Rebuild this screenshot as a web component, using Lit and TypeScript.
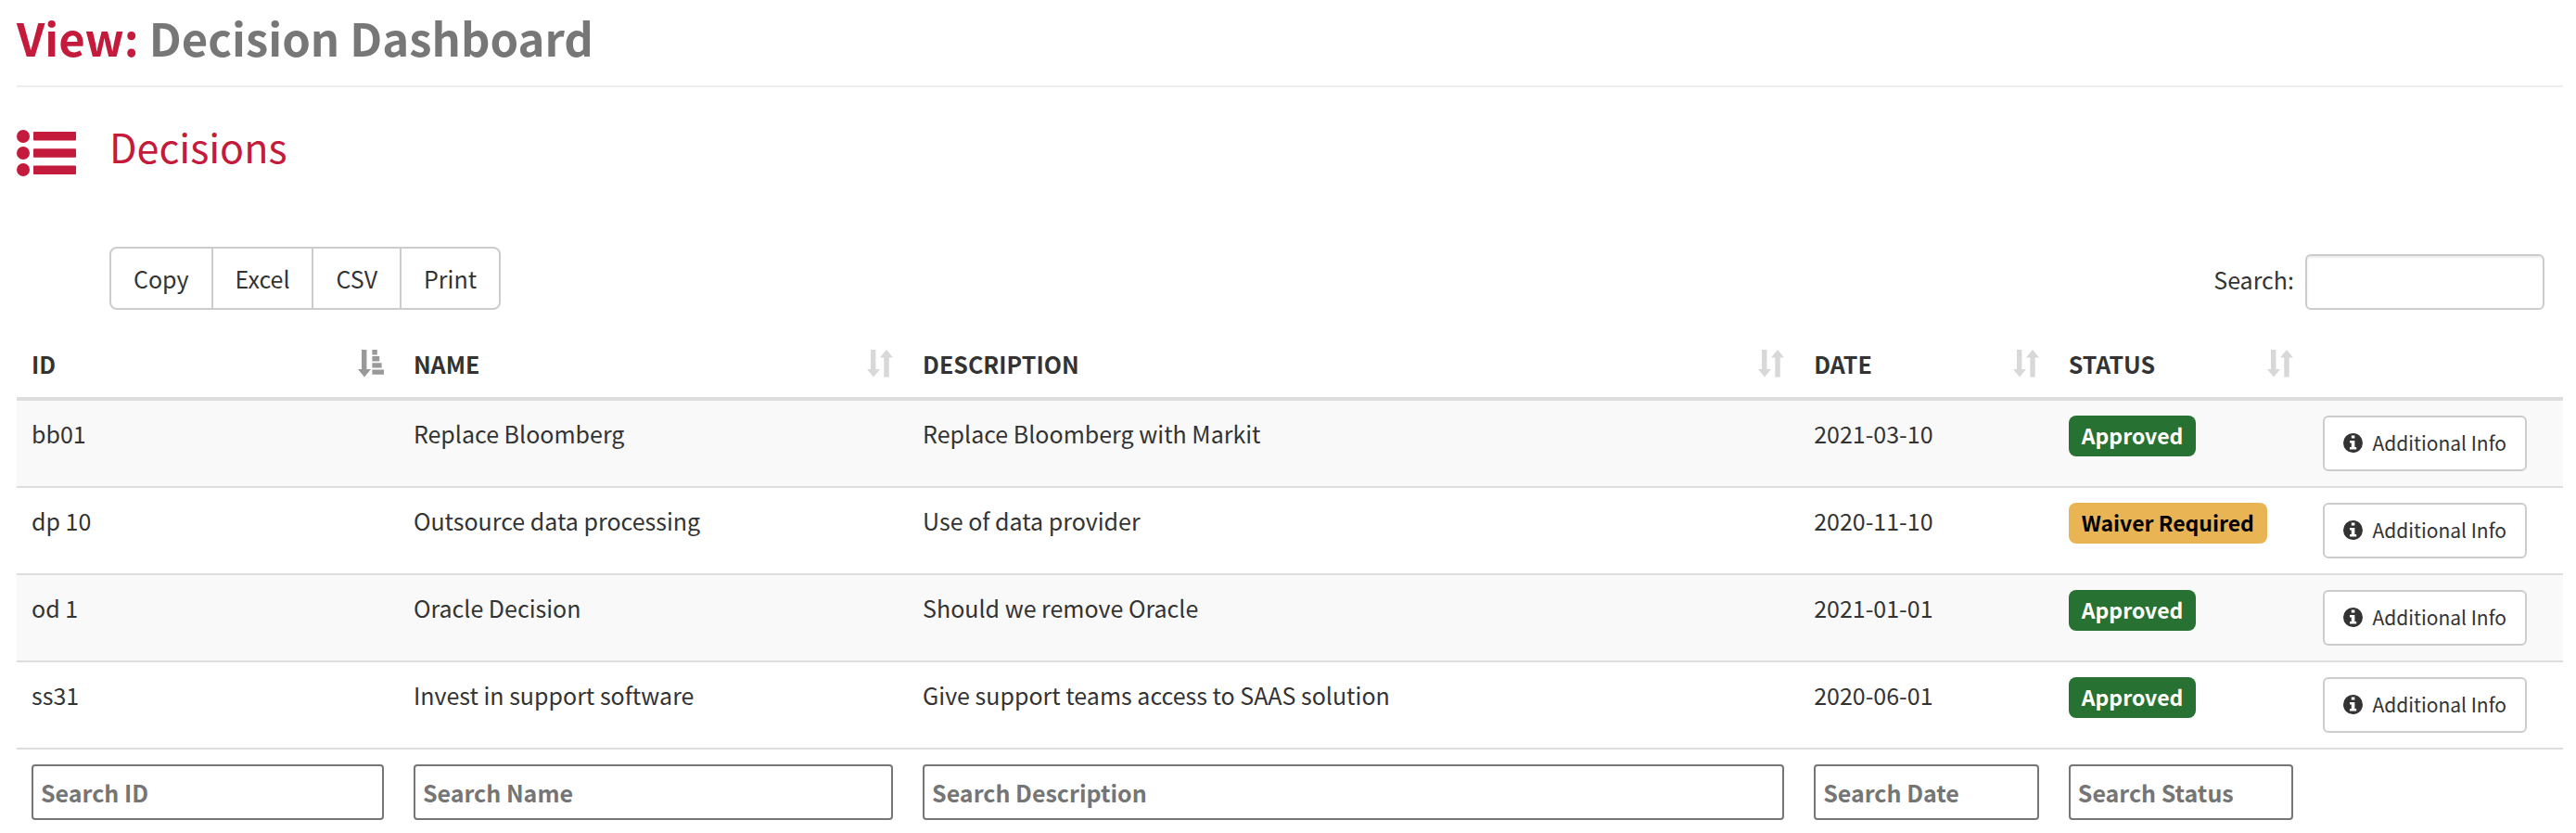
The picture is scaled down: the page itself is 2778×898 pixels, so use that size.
import { LitElement, html, css, svg, nothing } from "lit";
import { customElement, state } from "lit/decorators.js";

type Key = "id" | "name" | "description" | "date" | "status";
type Decision = Record<Key, string>;

const COLUMNS: { key: Key; label: string }[] = [
  { key: "id", label: "ID" },
  { key: "name", label: "Name" },
  { key: "description", label: "Description" },
  { key: "date", label: "Date" },
  { key: "status", label: "Status" },
];

const DECISIONS: Decision[] = [
  { id: "bb01", name: "Replace Bloomberg", description: "Replace Bloomberg with Markit", date: "2021-03-10", status: "Approved" },
  { id: "dp 10", name: "Outsource data processing", description: "Use of data provider", date: "2020-11-10", status: "Waiver Required" },
  { id: "od 1", name: "Oracle Decision", description: "Should we remove Oracle", date: "2021-01-01", status: "Approved" },
  { id: "ss31", name: "Invest in support software", description: "Give support teams access to SAAS solution", date: "2020-06-01", status: "Approved" },
];

const downArrow = svg`<path d="M4 0h5.4v21h4.6L7 29.4 0 21h4z" />`;

const sortedIcon = html`<svg class="sort-icon active" viewBox="0 0 28 30" aria-hidden="true">
  ${downArrow}
  <path d="M15.4 0h5.4v5.4h-5.4zM15.4 7h7.8v5.4h-7.8zM15.4 14.2h10.2v5.4H15.4zM15.4 21.4H28v5.4H15.4z" />
</svg>`;

const unsortedIcon = html`<svg class="sort-icon" viewBox="0 0 28 30" aria-hidden="true">
  ${downArrow}
  <path d="M21 0l7 8.4h-4.3v21h-5.4v-21H14z" />
</svg>`;

const listIcon = html`<svg class="list-icon" viewBox="0 0 64 50" aria-hidden="true">
  <circle cx="7" cy="7" r="7" /><circle cx="7" cy="25" r="7" /><circle cx="7" cy="43" r="7" />
  <rect x="18" y="2" width="46" height="9.4" rx="1" />
  <rect x="18" y="20.3" width="46" height="9.4" rx="1" />
  <rect x="18" y="38.6" width="46" height="9.4" rx="1" />
</svg>`;

const infoIcon = html`<svg class="info-icon" viewBox="0 0 21 21" aria-hidden="true">
  <path fill-rule="evenodd" d="M10.5 0a10.5 10.5 0 1 0 0 21a10.5 10.5 0 1 0 0-21zM8.8 2.6h3.6v3H8.8zM7 7.9h5.4v7.2h1.8v2.5H7v-2.5h1.8v-4.7H7z" />
</svg>`;

@customElement("app-root")
export class AppRoot extends LitElement {
  @state() private query = "";
  @state() private filters: Partial<Decision> = {};
  @state() private sortKey: Key = "id";

  static styles = css`
    :host {
      display: block;
      padding: 0 14px 14px 18px;
      background: #fff;
      color: #333;
      font-family: "Noto Sans CJK SC", "Noto Sans", sans-serif;
      font-size: 25px;
      line-height: 38px;
    }
    * { box-sizing: border-box; }
    button, input { font: inherit; color: inherit; margin: 0; }
    .title {
      margin: 0;
      padding: 8px 0 20px;
      border-bottom: 2px solid #eee;
      font-size: 49px;
      line-height: 64px;
      font-weight: 700;
      color: #777;
    }
    .accent { color: #c41a3b; }
    .section {
      display: flex;
      align-items: flex-end;
      gap: 36px;
      padding: 30px 0 76px;
      color: #c41a3b;
    }
    .list-icon { width: 64px; height: 50px; fill: currentColor; }
    .heading { margin: 0; font-size: 43px; line-height: 66px; font-weight: 400; }
    .toolbar { display: flex; justify-content: space-between; align-items: flex-end; padding: 0 20px 0 100px; }
    .exports { display: flex; }
    .export {
      height: 68px;
      padding: 0 24px;
      margin-left: -2px;
      border: 2px solid #ccc;
      background: #fff;
    }
    .export:first-child { margin-left: 0; border-radius: 8px 0 0 8px; }
    .export:last-child { border-radius: 0 8px 8px 0; }
    .search { display: flex; gap: 12px; line-height: 54px; }
    .search-box {
      width: 258px;
      height: 60px;
      padding: 10px 20px;
      border: 2px solid #ccc;
      border-radius: 6px;
      background: #fff;
      box-shadow: inset 0 2px 2px rgba(0, 0, 0, 0.075);
    }
    .table { width: 100%; margin-top: 12px; border-collapse: separate; border-spacing: 0; table-layout: fixed; }
    .col-id { width: 15%; }
    .col-name { width: 20%; }
    .col-description { width: 35%; }
    .head { padding: 24px 16px 14px; height: 86px; border-bottom: 4px solid #ddd; text-align: left; font-weight: 700; }
    .sort {
      display: flex;
      align-items: center;
      justify-content: space-between;
      width: 100%;
      padding: 0;
      border: 0;
      background: none;
      text-transform: uppercase;
    }
    .sort-icon { width: 28px; height: 30px; fill: #d8d8d8; }
    .active { fill: #999; }
    .cell { padding: 16px; height: 94px; border-bottom: 2px solid #ddd; vertical-align: top; }
    .row:nth-child(odd) { background: #f9f9f9; }
    .badge {
      display: inline-block;
      padding: 0 14px 2px;
      border-radius: 8px;
      background: #277232;
      color: #fff;
      font-size: 23px;
      line-height: 42px;
      font-weight: 700;
      vertical-align: top;
    }
    .waiver { background: #e9b454; color: #000; }
    .info {
      display: flex;
      align-items: center;
      gap: 10px;
      height: 60px;
      padding: 0 20px 2px;
      border: 2px solid #ccc;
      border-radius: 6px;
      background: #fff;
      font-size: 21px;
      white-space: nowrap;
    }
    .info-icon { width: 21px; height: 21px; fill: currentColor; }
    .foot { padding: 16px; }
    .filter {
      display: block;
      width: 100%;
      height: 60px;
      padding: 2px 8px;
      border: 2px solid #767676;
      border-radius: 4px;
      background: #fff;
      font-weight: 700;
    }
    .filter::placeholder { color: #757575; opacity: 1; }
  `;

  private get rows(): Decision[] {
    const q = this.query.toLowerCase();
    return DECISIONS.filter(
      (d) =>
        COLUMNS.some((c) => d[c.key].toLowerCase().includes(q)) &&
        COLUMNS.every((c) => d[c.key].toLowerCase().includes((this.filters[c.key] ?? "").toLowerCase()))
    ).sort((a, b) => a[this.sortKey].localeCompare(b[this.sortKey]));
  }

  private setFilter(key: Key, e: Event) {
    this.filters = { ...this.filters, [key]: (e.target as HTMLInputElement).value };
  }

  render() {
    return html`
      <h1 class="title"><span class="accent">View:</span> Decision Dashboard</h1>
      <div class="section">${listIcon}<h2 class="heading">Decisions</h2></div>
      <div class="toolbar">
        <div class="exports">
          ${["Copy", "Excel", "CSV", "Print"].map((t) => html`<button class="export" type="button">${t}</button>`)}
        </div>
        <div class="search">
          <label for="search">Search:</label>
          <input class="search-box" id="search" type="search"
            @input=${(e: Event) => (this.query = (e.target as HTMLInputElement).value)} />
        </div>
      </div>
      <table class="table">
        <colgroup>
          <col class="col-id" /><col class="col-name" /><col class="col-description" /><col /><col /><col />
        </colgroup>
        <thead>
          <tr>
            ${COLUMNS.map(
              (c) => html`<th class="head" scope="col" aria-sort=${this.sortKey === c.key ? "ascending" : nothing}>
                <button class="sort" type="button" @click=${() => (this.sortKey = c.key)}>
                  ${c.label}${this.sortKey === c.key ? sortedIcon : unsortedIcon}
                </button>
              </th>`
            )}
            <td class="head"></td>
          </tr>
        </thead>
        <tbody>
          ${this.rows.map(
            (d) => html`<tr class="row">
              <td class="cell">${d.id}</td>
              <td class="cell">${d.name}</td>
              <td class="cell">${d.description}</td>
              <td class="cell">${d.date}</td>
              <td class="cell"><span class="badge ${d.status === "Approved" ? "" : "waiver"}">${d.status}</span></td>
              <td class="cell"><button class="info" type="button">${infoIcon}Additional Info</button></td>
            </tr>`
          )}
        </tbody>
        <tfoot>
          <tr>
            ${COLUMNS.map(
              (c) => html`<td class="foot">
                <input class="filter" type="text" placeholder="Search ${c.label}" aria-label="Search ${c.label}"
                  @input=${(e: Event) => this.setFilter(c.key, e)} />
              </td>`
            )}
            <td class="foot"></td>
          </tr>
        </tfoot>
      </table>
    `;
  }
}
